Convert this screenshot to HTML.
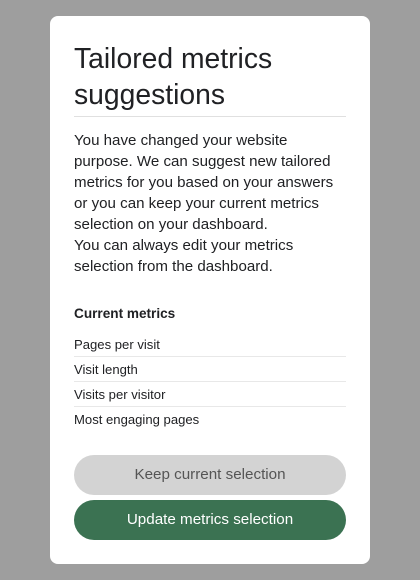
<!DOCTYPE html>
<html><head><meta charset="utf-8"><style>
*{margin:0;padding:0;box-sizing:border-box}
body{width:420px;height:580px;background:#9e9e9e;font-family:"Liberation Sans",sans-serif;position:relative;overflow:hidden}
.card{position:absolute;left:50px;top:16px;width:320px;height:548px;background:#fff;border-radius:8px}
h1{position:absolute;left:24px;top:24px;font-size:28.3px;font-weight:400;line-height:36px;color:#202124;width:272px}
.hr{position:absolute;left:24px;top:100px;width:272px;height:1px;background:#e0e0e0}
.p{position:absolute;left:24px;top:114px;width:276px;font-size:15.1px;line-height:21px;color:#202124}
.cm{position:absolute;left:24px;top:290px;font-size:13.6px;font-weight:bold;color:#202124}
.list{position:absolute;left:24px;top:316px;width:272px}
.list div{height:25px;line-height:25px;font-size:13.1px;color:#202124;border-bottom:1px solid #e8e8e8}
.list div:last-child{border-bottom:none}
.btn{position:absolute;left:24px;width:272px;height:40px;border-radius:20px;text-align:center;line-height:40px;font-size:15.2px}
.b1{top:439px;background:#d3d3d3;color:#555}
.b2{top:484px;background:#3b7252;color:#fff}
</style></head><body>
<div class="card">
<h1>Tailored metrics suggestions</h1>
<div class="hr"></div>
<div class="p">You have changed your website purpose. We can suggest new tailored metrics for you based on your answers or you can keep your current metrics selection on your dashboard.<br>You can always edit your metrics selection from the dashboard.</div>
<div class="cm">Current metrics</div>
<div class="list"><div>Pages per visit</div><div>Visit length</div><div>Visits per visitor</div><div>Most engaging pages</div></div>
<div class="btn b1">Keep current selection</div>
<div class="btn b2">Update metrics selection</div>
</div>
</body></html>
